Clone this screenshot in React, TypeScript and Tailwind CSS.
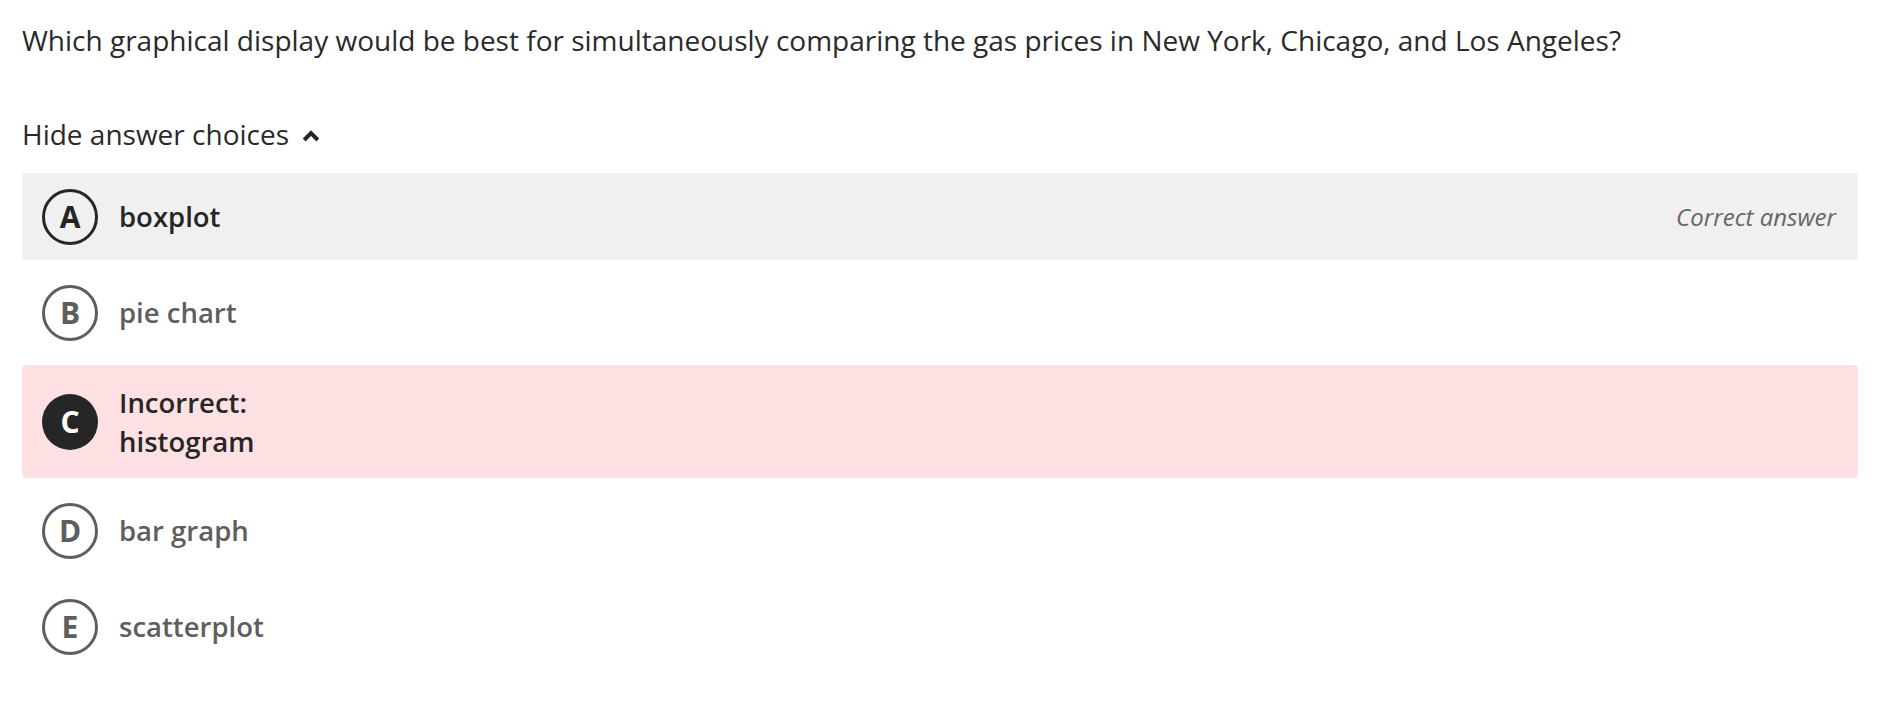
import React from "react";

type Choice = {
  letter: string;
  text: string;
  state: "correct" | "incorrect" | "plain";
};

const choices: Choice[] = [
  { letter: "A", text: "boxplot", state: "correct" },
  { letter: "B", text: "pie chart", state: "plain" },
  { letter: "C", text: "histogram", state: "incorrect" },
  { letter: "D", text: "bar graph", state: "plain" },
  { letter: "E", text: "scatterplot", state: "plain" },
];

function LetterBadge({ letter, state }: { letter: string; state: Choice["state"] }) {
  if (state === "incorrect") {
    return (
      <span className="flex h-[56px] w-[56px] items-center justify-center rounded-full bg-[#262626] text-[30px] font-bold leading-none text-white">
        {letter}
      </span>
    );
  }
  const tone = state === "correct" ? "border-[#262626] text-[#262626]" : "border-[#5e5e5e] text-[#5e5e5e]";
  return (
    <span
      className={`flex h-[56px] w-[56px] items-center justify-center rounded-full border-[3px] text-[30px] font-bold leading-none ${tone}`}
    >
      {letter}
    </span>
  );
}

function ChoiceRow({ choice }: { choice: Choice }) {
  const bg =
    choice.state === "correct"
      ? "bg-[#f0f0f0]"
      : choice.state === "incorrect"
        ? "bg-[#ffe1e3]"
        : "bg-transparent";
  const textColor = choice.state === "plain" ? "text-[#5e5e5e]" : "text-[#262626]";

  return (
    <li className={`flex items-center rounded-[4px] py-[17.5px] pl-[20px] pr-[22px] ${bg}`}>
      <div className="flex h-[52px] items-center">
        <LetterBadge letter={choice.letter} state={choice.state} />
      </div>
      <div className={`ml-[21px] flex-1 text-[27.5px] font-semibold leading-[39px] ${textColor}`}>
        {choice.state === "incorrect" && <div>Incorrect:</div>}
        <div>{choice.text}</div>
      </div>
      {choice.state === "correct" && (
        <span className="text-[24px] italic text-[#666666]">Correct answer</span>
      )}
    </li>
  );
}

export default function App() {
  return (
    <div
      className="min-h-[704px] bg-white pl-[22px] pr-[36px] pt-[21px] text-[#2a2a2a]"
      style={{ fontFamily: '"Open Sans", "Noto Sans", sans-serif' }}
    >
      <p className="text-[28px] leading-[39.5px]">
        Which graphical display would be best for simultaneously comparing the gas prices in New York, Chicago, and Los
        Angeles?
      </p>

      <button type="button" className="mt-[54.5px] flex items-center gap-[13px] text-[28px] leading-[39.5px]">
        Hide answer choices
        <svg width="18" height="12" viewBox="0 0 18 12" fill="none" className="mt-[3px]">
          <path d="M2.2 10L9 3.2L15.8 10" stroke="#262626" strokeWidth="4" strokeLinejoin="miter" />
        </svg>
      </button>

      <ul className="mt-[18.5px] flex flex-col gap-[9px]">
        {choices.map((c) => (
          <ChoiceRow key={c.letter} choice={c} />
        ))}
      </ul>
    </div>
  );
}
